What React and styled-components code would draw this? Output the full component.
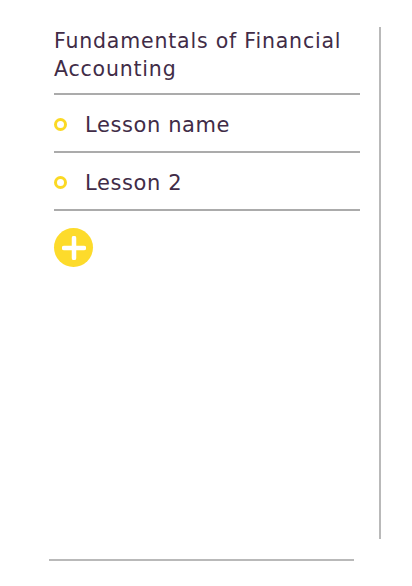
import React from 'react';
import styled, { createGlobalStyle } from 'styled-components';

const GlobalStyle = createGlobalStyle`
  html, body {
    margin: 0;
    padding: 0;
    background: #fff;
  }
  body {
    font-family: "DejaVu Sans", "Liberation Sans", sans-serif;
    color: #412c47;
  }
`;

const Page = styled.div`
  width: 412px;
  height: 586px;
  padding-top: 28px;
  box-sizing: border-box;
`;

const Sidebar = styled.aside`
  width: 381px;
  height: 512px;
  box-sizing: border-box;
  border-right: 2px solid #b9b9b9;
  padding: 0 19px 0 54px;
`;

const CourseTitle = styled.h1`
  margin: -1px 0 0;
  font-size: 20.5px;
  font-weight: 400;
  line-height: 28px;
  letter-spacing: 0.8px;
  padding-bottom: 10px;
  border-bottom: 2px solid #ababab;
`;

const LessonList = styled.ul`
  list-style: none;
  margin: 0;
  padding: 0;
`;

const LessonRow = styled.li`
  display: flex;
  align-items: center;
  gap: 18px;
  height: 58px;
  box-sizing: border-box;
  padding-top: 4px;
  border-bottom: 2px solid #ababab;
  font-size: 21px;
  letter-spacing: 0.6px;
`;

const Dot = styled.span`
  width: 7px;
  height: 7px;
  border-radius: 50%;
  border: 3px solid #fbd924;
  flex-shrink: 0;
  margin-top: -2px;
`;

const AddButton = styled.button`
  width: 39px;
  height: 39px;
  margin-top: 17px;
  padding: 0;
  border: none;
  border-radius: 50%;
  background: #fddb2b;
  display: flex;
  align-items: center;
  justify-content: center;
  cursor: pointer;
`;

const FooterRule = styled.hr`
  margin: 20px 0 0 49px;
  width: 305px;
  border: none;
  border-top: 2px solid #b9b9b9;
`;

const lessons = ['Lesson name', 'Lesson 2'];

export default function App() {
  return (
    <>
      <GlobalStyle />
      <Page>
        <Sidebar>
          <CourseTitle>Fundamentals of Financial Accounting</CourseTitle>
          <LessonList>
            {lessons.map((l) => (
              <LessonRow key={l}>
                <Dot />
                {l}
              </LessonRow>
            ))}
          </LessonList>
          <AddButton aria-label="Add lesson">
            <svg width="24" height="24" viewBox="0 0 24 24">
              <path d="M12 2v20M2 12h20" stroke="#fff" strokeWidth="4.5" strokeLinecap="round" />
            </svg>
          </AddButton>
        </Sidebar>
        <FooterRule />
      </Page>
    </>
  );
}
